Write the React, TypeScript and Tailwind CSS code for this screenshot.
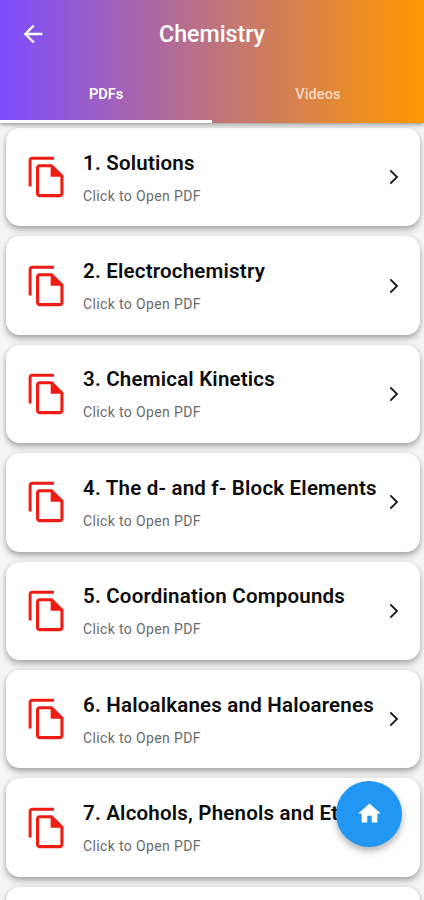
const chapters = [
  "1. Solutions",
  "2. Electrochemistry",
  "3. Chemical Kinetics",
  "4. The d- and f- Block Elements",
  "5. Coordination Compounds",
  "6. Haloalkanes and Haloarenes",
  "7. Alcohols, Phenols and Ethers",
];

const cardSurface =
  "shrink-0 rounded-[14px] bg-white shadow-[0_4px_6px_rgba(0,0,0,0.25),0_1px_5px_rgba(0,0,0,0.13)]";

function CopyIcon() {
  return (
    <svg viewBox="0 0 24 24" className="size-[44px] shrink-0" fill="#f01c14">
      <path d="M15.8 1H3.9C2.8 1 2 1.8 2 2.9V17.2h1.6V2.6H15.8z" />
      <path
        fillRule="evenodd"
        d="M14.8 5H8C6.9 5 6 5.9 6 7v14c0 1.1.9 2 2 2h11c1.1 0 2-.9 2-2V11.2zM7.7 21.3V6.7H14V11.9h5.3v9.4z"
      />
    </svg>
  );
}

function ChapterCard({ title }: { title: string }) {
  return (
    <li className={`flex h-[98.4px] items-center pl-[19px] pr-[19px] ${cardSurface}`}>
      <CopyIcon />
      <div className="ml-[14.5px] w-[294px] shrink-0 overflow-hidden whitespace-nowrap pt-[1px]">
        <h2 className="text-[20.5px] font-semibold leading-6 tracking-[0.2px] text-[#0c0c0c]">{title}</h2>
        <p className="mt-[12px] text-[14px] leading-[18px] tracking-[0.37px] text-[#6a6a6a]">Click to Open PDF</p>
      </div>
      <svg viewBox="0 0 10 16" className="ml-[11.5px] h-4 w-2.5 shrink-0" fill="none" stroke="#161616" strokeWidth="1.8">
        <path d="M1.3 1.3L8 8L1.3 14.7" />
      </svg>
    </li>
  );
}

export default function App() {
  return (
    <div className="relative flex h-[900px] w-[424px] flex-col overflow-hidden bg-[#f5f5f5] font-['Roboto',sans-serif]">
      <header className="relative z-10 flex h-[123px] shrink-0 flex-col bg-linear-to-r/srgb from-[#7c4dff] to-[#ff9800] text-white shadow-[0_2px_4px_rgba(0,0,0,0.35)]">
        <div className="grid h-[67px] grid-cols-[67px_1fr_67px] items-center">
          <svg viewBox="0 0 24 24" className="ml-[19px] size-[28px]" fill="currentColor">
            <path d="M20 11H7.83l5.59-5.59L12 4l-8 8 8 8 1.41-1.41L7.83 13H20v-2z" />
          </svg>
          <h1 className="pt-[1px] text-center text-[23.2px] font-medium">Chemistry</h1>
        </div>
        <nav className="grid flex-1 grid-cols-2 text-center text-[14.5px] font-medium">
          <span className="border-b-[3px] border-white pt-[17px] font-semibold">PDFs</span>
          <span className="pt-[17px] tracking-[0.1px] text-white/70">Videos</span>
        </nav>
      </header>
      <ul className="flex flex-col gap-[10px] pl-[5.5px] pr-[4.5px] pt-[5px]">
        {chapters.map((title) => (
          <ChapterCard key={title} title={title} />
        ))}
        <li className={`h-[98.4px] ${cardSurface}`} />
      </ul>
      <button
        aria-label="Home"
        className="absolute left-[336px] top-[781px] z-20 flex size-[66px] items-center justify-center rounded-full bg-[#2196f3] shadow-[0_4px_7px_rgba(0,0,0,0.3)]"
      >
        <svg viewBox="0 0 24 24" className="mb-px size-[27px]" fill="white">
          <path d="M10 20v-6h4v6h5v-8h3L12 3 2 12h3v8z" />
        </svg>
      </button>
    </div>
  );
}
